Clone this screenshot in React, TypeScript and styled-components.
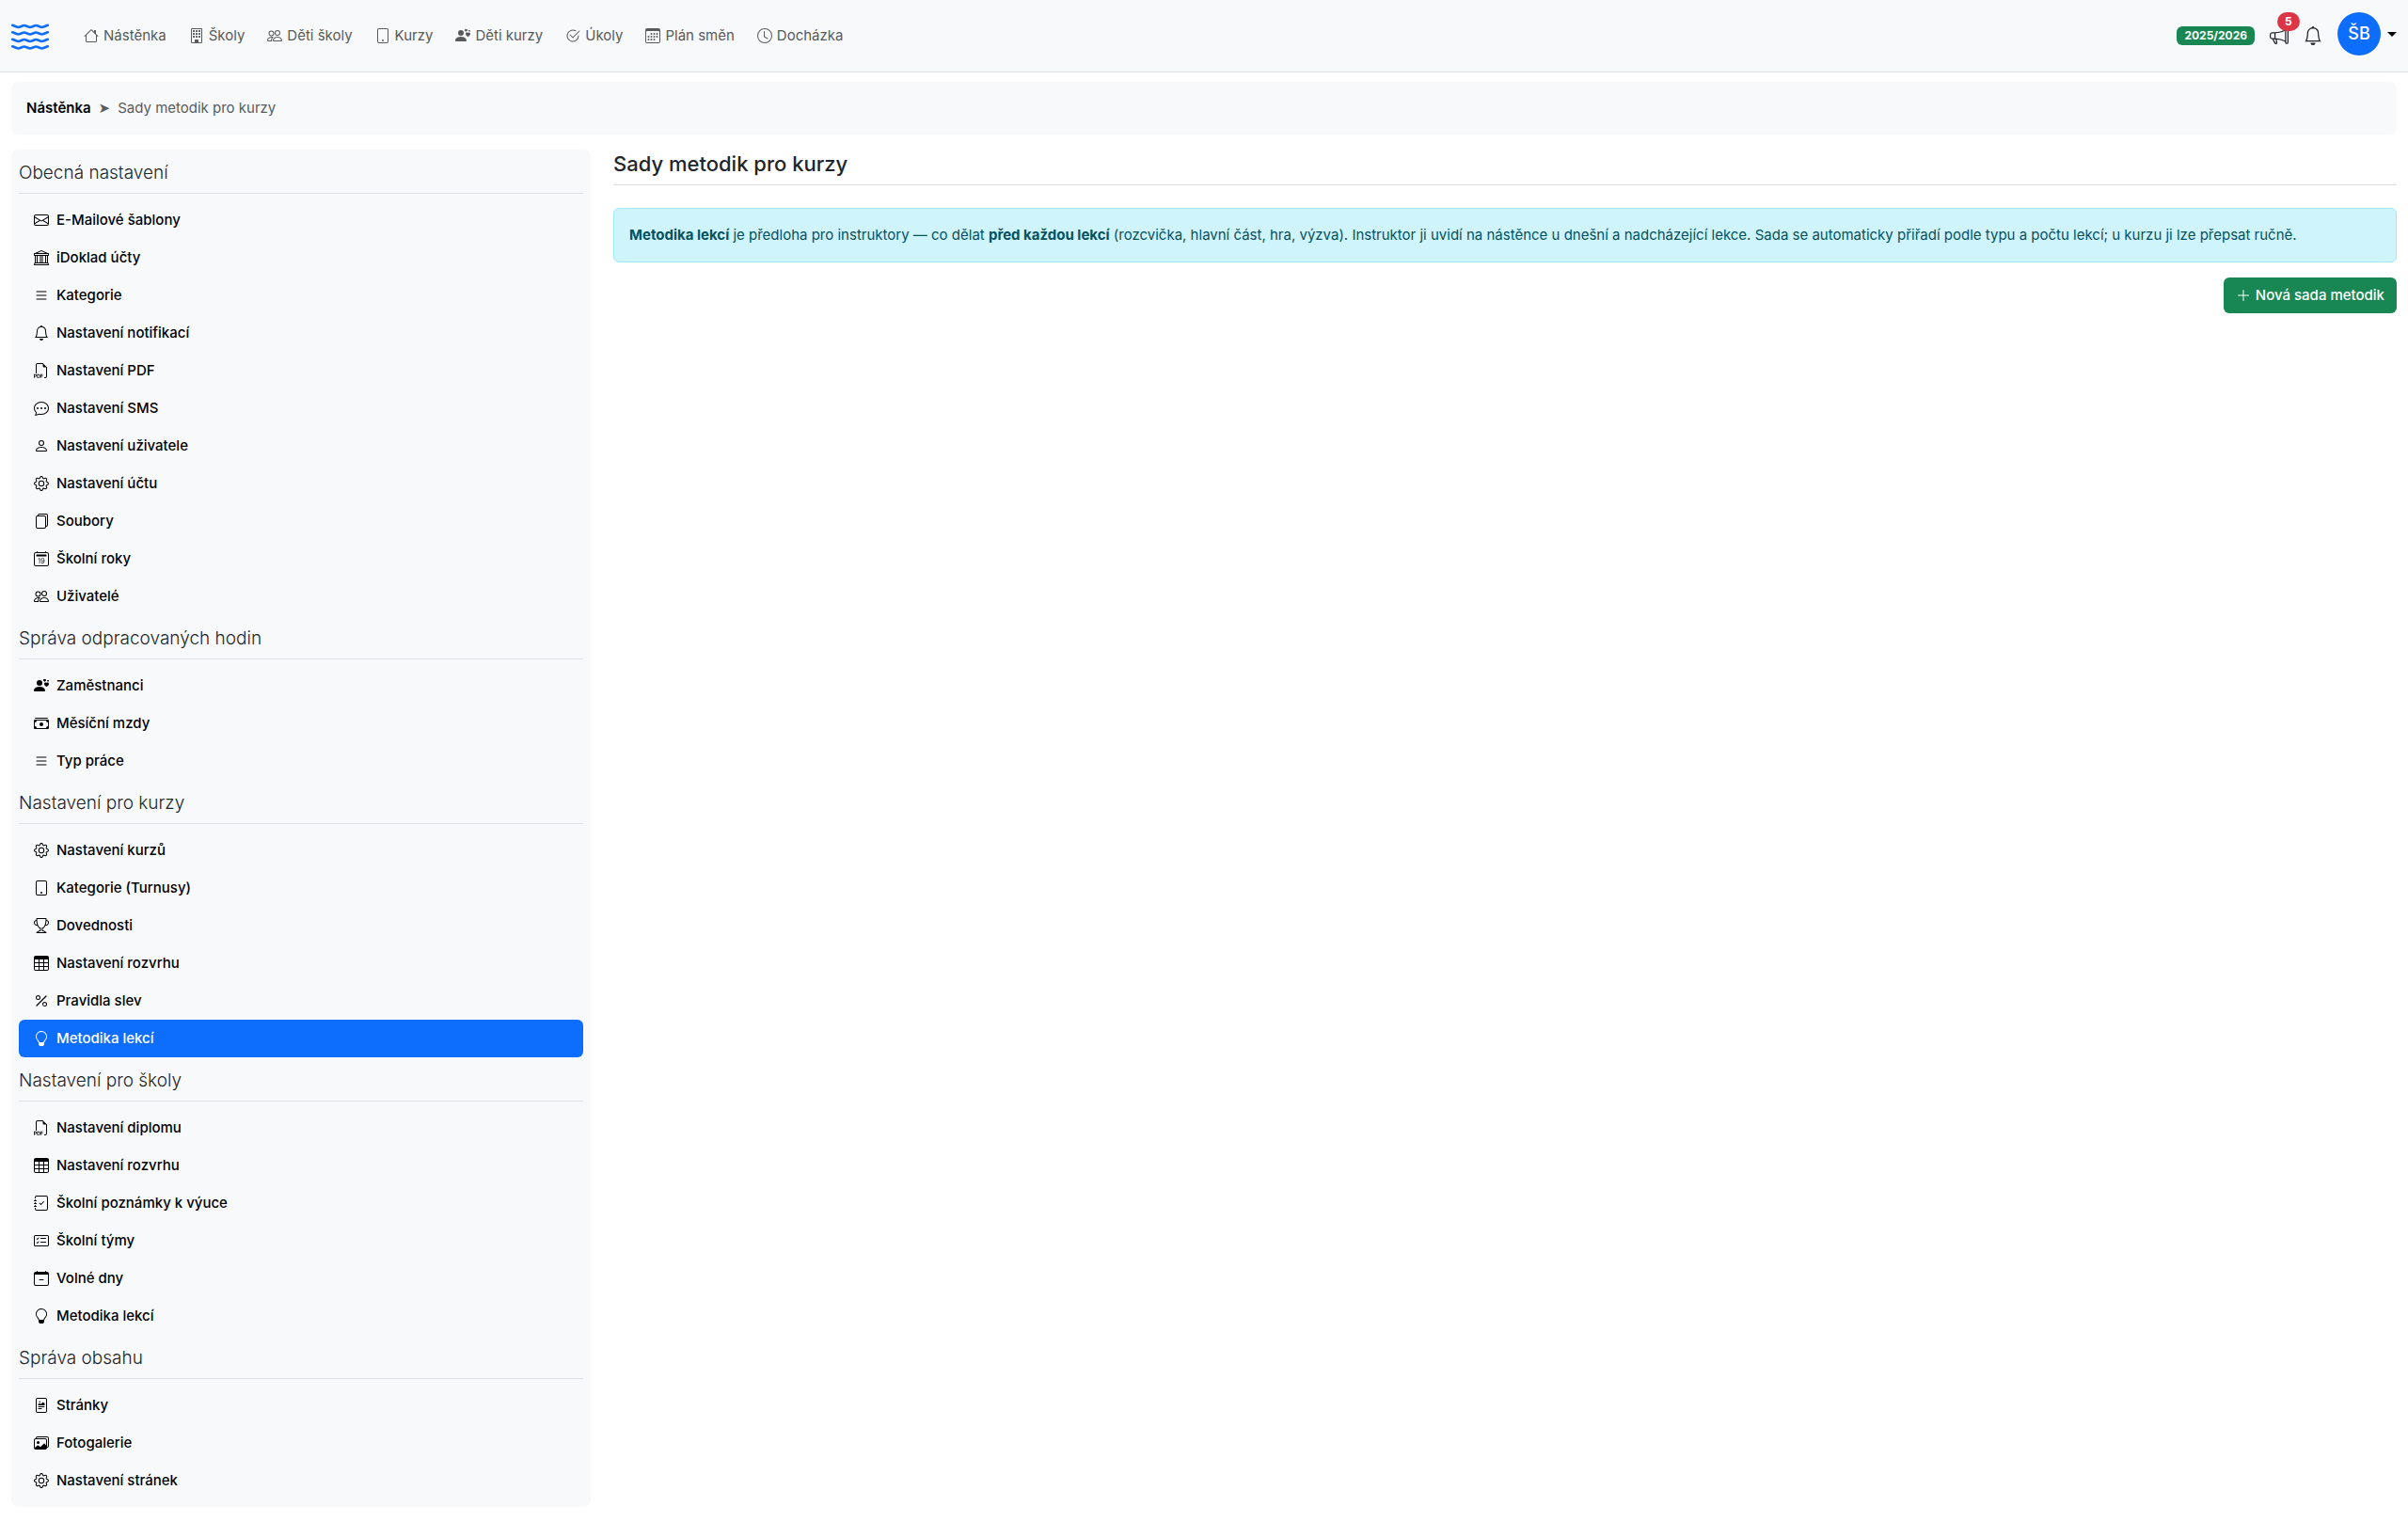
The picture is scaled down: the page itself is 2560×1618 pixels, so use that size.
import React from 'react';
import styled, { createGlobalStyle } from 'styled-components';
import type { IconType } from 'react-icons';
import {
  BsBank, BsBell, BsBuilding, BsCalendar2Date, BsCalendar3, BsCalendarMinus, BsCardChecklist,
  BsCashStack, BsChatDots, BsCheck2Circle, BsClock, BsEnvelope, BsFileRichtext, BsFiles,
  BsFiletypePdf, BsGear, BsHouse, BsImages, BsJournalCheck, BsLightbulb, BsList, BsMegaphone,
  BsPeople, BsPercent, BsPerson, BsPersonHearts, BsPlusLg, BsTable, BsTablet, BsTrophy, BsWater,
} from 'react-icons/bs';

type LinkItem = { icon: IconType; label: string; active?: boolean };
type Group = { title: string; items: LinkItem[] };

const navItems: LinkItem[] = [
  { icon: BsHouse, label: 'Nástěnka' },
  { icon: BsBuilding, label: 'Školy' },
  { icon: BsPeople, label: 'Děti školy' },
  { icon: BsTablet, label: 'Kurzy' },
  { icon: BsPersonHearts, label: 'Děti kurzy' },
  { icon: BsCheck2Circle, label: 'Úkoly' },
  { icon: BsCalendar3, label: 'Plán směn' },
  { icon: BsClock, label: 'Docházka' },
];

const groups: Group[] = [
  {
    title: 'Obecná nastavení',
    items: [
      { icon: BsEnvelope, label: 'E-Mailové šablony' },
      { icon: BsBank, label: 'iDoklad účty' },
      { icon: BsList, label: 'Kategorie' },
      { icon: BsBell, label: 'Nastavení notifikací' },
      { icon: BsFiletypePdf, label: 'Nastavení PDF' },
      { icon: BsChatDots, label: 'Nastavení SMS' },
      { icon: BsPerson, label: 'Nastavení uživatele' },
      { icon: BsGear, label: 'Nastavení účtu' },
      { icon: BsFiles, label: 'Soubory' },
      { icon: BsCalendar2Date, label: 'Školní roky' },
      { icon: BsPeople, label: 'Uživatelé' },
    ],
  },
  {
    title: 'Správa odpracovaných hodin',
    items: [
      { icon: BsPersonHearts, label: 'Zaměstnanci' },
      { icon: BsCashStack, label: 'Měsíční mzdy' },
      { icon: BsList, label: 'Typ práce' },
    ],
  },
  {
    title: 'Nastavení pro kurzy',
    items: [
      { icon: BsGear, label: 'Nastavení kurzů' },
      { icon: BsTablet, label: 'Kategorie (Turnusy)' },
      { icon: BsTrophy, label: 'Dovednosti' },
      { icon: BsTable, label: 'Nastavení rozvrhu' },
      { icon: BsPercent, label: 'Pravidla slev' },
      { icon: BsLightbulb, label: 'Metodika lekcí', active: true },
    ],
  },
  {
    title: 'Nastavení pro školy',
    items: [
      { icon: BsFiletypePdf, label: 'Nastavení diplomu' },
      { icon: BsTable, label: 'Nastavení rozvrhu' },
      { icon: BsJournalCheck, label: 'Školní poznámky k výuce' },
      { icon: BsCardChecklist, label: 'Školní týmy' },
      { icon: BsCalendarMinus, label: 'Volné dny' },
      { icon: BsLightbulb, label: 'Metodika lekcí' },
    ],
  },
  {
    title: 'Správa obsahu',
    items: [
      { icon: BsFileRichtext, label: 'Stránky' },
      { icon: BsImages, label: 'Fotogalerie' },
      { icon: BsGear, label: 'Nastavení stránek' },
    ],
  },
];

const GlobalStyle = createGlobalStyle`
  *, *::before, *::after { box-sizing: border-box; }
  body {
    margin: 0;
    background: #fff;
    color: #212529;
    font-family: Inter, "Liberation Sans", sans-serif;
    font-size: 15px;
    line-height: 24px;
  }
  a { color: inherit; text-decoration: none; }
  button { font: inherit; color: inherit; border: 0; background: none; padding: 0; cursor: pointer; }
  svg { flex: none; }
`;

const Navbar = styled.header`
  display: flex;
  align-items: center;
  height: 77px;
  padding: 0 12px;
  background: #f8f9fa;
  border-bottom: 1px solid #dee2e6;
`;

const Brand = styled.a`
  display: flex;
  margin-right: 37px;
  color: #0d6efd;
`;

const Nav = styled.nav`
  display: flex;
  flex: 1;
  gap: 24px;
  color: #595a5b;
`;

const NavLink = styled.a`
  display: flex;
  align-items: center;
  gap: 5px;
  white-space: nowrap;
`;

const Tools = styled.div`
  display: flex;
  align-items: center;
`;

const YearBadge = styled.span`
  padding: 4px 8px;
  border-radius: 6px;
  background: #198754;
  color: #fff;
  font-size: 12px;
  font-weight: 700;
  line-height: 12px;
`;

const IconButton = styled.button`
  position: relative;
  display: flex;
  margin-left: 16px;
`;

const CountBadge = styled.span`
  position: absolute;
  top: -15px;
  left: 8px;
  padding: 4px 8px;
  border-radius: 10px;
  background: #dc3545;
  color: #fff;
  font-size: 12px;
  font-weight: 700;
  line-height: 12px;
`;

const UserButton = styled.button`
  display: flex;
  align-items: center;
  gap: 7px;
  margin-left: 16px;
  padding-bottom: 4px;
`;

const Avatar = styled.span`
  display: grid;
  place-items: center;
  width: 46px;
  height: 46px;
  border-radius: 50%;
  background: #0d6efd;
  color: #fff;
  font-size: 18px;
  font-weight: 500;
`;

const Caret = styled.span`
  border: 5px solid transparent;
  border-top-color: #000;
  border-bottom: 0;
`;

const Page = styled.div`
  padding: 10px 12px 16px;
`;

const Breadcrumb = styled.nav`
  display: flex;
  gap: 8px;
  padding: 16px;
  border-radius: 8px;
  background: #f8f9fa;
  color: #595c5f;
`;

const CrumbLink = styled.a`
  color: #000;
  font-weight: 600;
`;

const Arrow = styled.span`
  font-family: "DejaVu Sans", sans-serif;
`;

const Columns = styled.div`
  display: grid;
  grid-template-columns: minmax(0, 1fr) minmax(0, 3fr);
  align-items: start;
  margin: 16px -12px 0;
`;

const Sidebar = styled.aside`
  margin: 0 12px;
  padding: 0 8px 8px;
  border-radius: 8px;
  background: #f8f9fa;
`;

const GroupTitle = styled.h2`
  margin: 0 0 8px;
  padding: 13px 0 9px;
  border-bottom: 1px solid #dee2e6;
  font-size: 19px;
  font-weight: 300;
  line-height: 24px;
`;

const Menu = styled.ul`
  margin: 0;
  padding: 0;
  list-style: none;
`;

const MenuLink = styled.a<{ $active?: boolean }>`
  display: flex;
  align-items: center;
  gap: 8px;
  padding: 8px 16px;
  border-radius: 6px;
  background: ${(p) => (p.$active ? '#0d6efd' : 'transparent')};
  color: ${(p) => (p.$active ? '#fff' : '#000')};
  font-weight: 500;
`;

const Main = styled.main`
  display: flex;
  flex-direction: column;
  margin: 0 12px;
`;

const Title = styled.h1`
  margin: 0 0 24px;
  padding-bottom: 6px;
  border-bottom: 1px solid #dee2e6;
  font-size: 22px;
  font-weight: 500;
  line-height: 31px;
`;

const Info = styled.p`
  margin: 0 0 16px;
  padding: 16px;
  border: 1px solid #9eeaf9;
  border-radius: 6px;
  background: #cff4fc;
  color: #055160;
`;

const Strong = styled.strong`
  font-weight: 700;
`;

const AddButton = styled.button`
  display: flex;
  align-items: center;
  align-self: flex-end;
  gap: 5px;
  padding: 7px 13px;
  border-radius: 6px;
  background: #198754;
  color: #fff;
  font-weight: 500;
`;

export default function App() {
  return (
    <>
      <GlobalStyle />
      <Navbar>
        <Brand href="#" aria-label="Domů"><BsWater size={40} /></Brand>
        <Nav>
          {navItems.map(({ icon: Icon, label }) => (
            <NavLink href="#" key={label}><Icon size={16} />{label}</NavLink>
          ))}
        </Nav>
        <Tools>
          <YearBadge>2025/2026</YearBadge>
          <IconButton type="button" aria-label="Novinky">
            <BsMegaphone size={20} />
            <CountBadge>5</CountBadge>
          </IconButton>
          <IconButton type="button" aria-label="Notifikace"><BsBell size={20} /></IconButton>
          <UserButton type="button"><Avatar>ŠB</Avatar><Caret /></UserButton>
        </Tools>
      </Navbar>
      <Page>
        <Breadcrumb>
          <CrumbLink href="#">Nástěnka</CrumbLink>
          <Arrow>➤</Arrow>
          <span>Sady metodik pro kurzy</span>
        </Breadcrumb>
        <Columns>
          <Sidebar>
            {groups.map((group) => (
              <section key={group.title}>
                <GroupTitle>{group.title}</GroupTitle>
                <Menu>
                  {group.items.map(({ icon: Icon, label, active }) => (
                    <li key={label}>
                      <MenuLink href="#" $active={active}><Icon size={16} />{label}</MenuLink>
                    </li>
                  ))}
                </Menu>
              </section>
            ))}
          </Sidebar>
          <Main>
            <Title>Sady metodik pro kurzy</Title>
            <Info>
              <Strong>Metodika lekcí</Strong> je předloha pro instruktory — co dělat <Strong>před každou lekcí</Strong> (rozcvička, hlavní část, hra, výzva). Instruktor ji uvidí na nástěnce u dnešní a nadcházející lekce. Sada se automaticky přiřadí podle typu a počtu lekcí; u kurzu ji lze přepsat ručně.
            </Info>
            <AddButton type="button"><BsPlusLg size={16} />Nová sada metodik</AddButton>
          </Main>
        </Columns>
      </Page>
    </>
  );
}
